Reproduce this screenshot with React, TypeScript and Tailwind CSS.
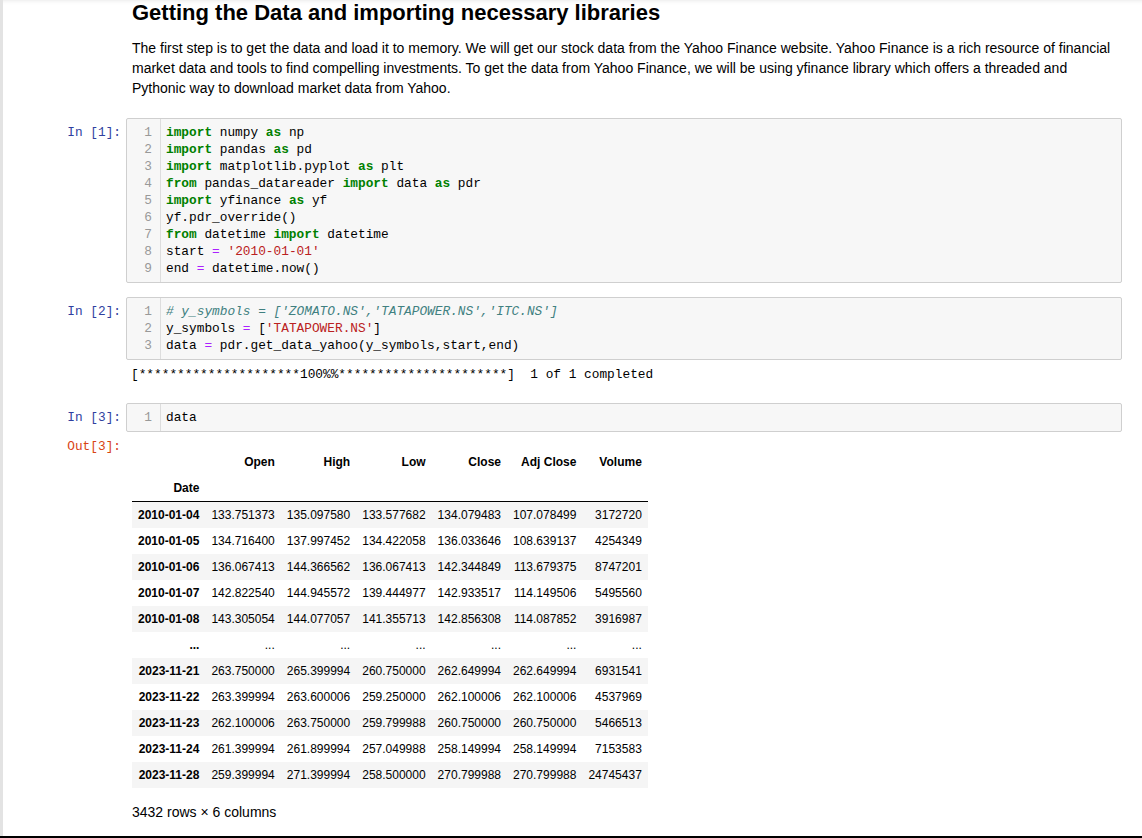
type Tok = [string, string]

const tone: Record<string, string> = {
  k: 'text-[#008000] font-bold',
  o: 'text-[#AA22FF]',
  s: 'text-[#BA2121]',
  c: 'text-[#408080] italic',
  n: '',
}

const cell1: Tok[][] = [
  [['k', 'import'], ['n', ' numpy '], ['k', 'as'], ['n', ' np']],
  [['k', 'import'], ['n', ' pandas '], ['k', 'as'], ['n', ' pd']],
  [['k', 'import'], ['n', ' matplotlib.pyplot '], ['k', 'as'], ['n', ' plt']],
  [['k', 'from'], ['n', ' pandas_datareader '], ['k', 'import'], ['n', ' data '], ['k', 'as'], ['n', ' pdr']],
  [['k', 'import'], ['n', ' yfinance '], ['k', 'as'], ['n', ' yf']],
  [['n', 'yf.pdr_override()']],
  [['k', 'from'], ['n', ' datetime '], ['k', 'import'], ['n', ' datetime']],
  [['n', 'start '], ['o', '='], ['n', ' '], ['s', "'2010-01-01'"]],
  [['n', 'end '], ['o', '='], ['n', ' datetime.now()']],
]

const cell2: Tok[][] = [
  [['c', "# y_symbols = ['ZOMATO.NS','TATAPOWER.NS','ITC.NS']"]],
  [['n', 'y_symbols '], ['o', '='], ['n', ' ['], ['s', "'TATAPOWER.NS'"], ['n', ']']],
  [['n', 'data '], ['o', '='], ['n', ' pdr.get_data_yahoo(y_symbols,start,end)']],
]

const cell3: Tok[][] = [[['n', 'data']]]

const cols = ['Open', 'High', 'Low', 'Close', 'Adj Close', 'Volume']

const rows: string[][] = [
  ['2010-01-04', '133.751373', '135.097580', '133.577682', '134.079483', '107.078499', '3172720'],
  ['2010-01-05', '134.716400', '137.997452', '134.422058', '136.033646', '108.639137', '4254349'],
  ['2010-01-06', '136.067413', '144.366562', '136.067413', '142.344849', '113.679375', '8747201'],
  ['2010-01-07', '142.822540', '144.945572', '139.444977', '142.933517', '114.149506', '5495560'],
  ['2010-01-08', '143.305054', '144.077057', '141.355713', '142.856308', '114.087852', '3916987'],
  ['...', '...', '...', '...', '...', '...', '...'],
  ['2023-11-21', '263.750000', '265.399994', '260.750000', '262.649994', '262.649994', '6931541'],
  ['2023-11-22', '263.399994', '263.600006', '259.250000', '262.100006', '262.100006', '4537969'],
  ['2023-11-23', '262.100006', '263.750000', '259.799988', '260.750000', '260.750000', '5466513'],
  ['2023-11-24', '261.399994', '261.899994', '257.049988', '258.149994', '258.149994', '7153583'],
  ['2023-11-28', '259.399994', '271.399994', '258.500000', '270.799988', '270.799988', '24745437'],
]

const mono = "font-['Liberation_Mono','DejaVu_Sans_Mono',monospace] text-[12.8px] leading-[17px]"

function Prompt({ label, out }: { label?: string; out?: boolean }) {
  return (
    <div
      className={`w-[123px] shrink-0 whitespace-pre pr-[5px] pt-[6px] text-right ${mono} ${
        out ? 'text-[#D84315]' : 'text-[#303F9F]'
      }`}
    >
      {label}
    </div>
  )
}

function CodeCell({ n, lines }: { n: number; lines: Tok[][] }) {
  return (
    <div className="flex">
      <Prompt label={`In [${n}]:`} />
      <div className={`mr-[20px] flex flex-1 rounded-[2px] border border-[#cfcfcf] bg-[#f7f7f7] ${mono}`}>
        <div className="w-[34px] shrink-0 border-r border-[#ddd] py-[5px] pr-[8px] text-right text-[#999]">
          {lines.map((_, i) => (
            <div key={i}>{i + 1}</div>
          ))}
        </div>
        <div className="py-[5px] pl-[5px] text-black">
          {lines.map((line, i) => (
            <div key={i} className="whitespace-pre">
              {line.map(([t, s], j) => (
                <span key={j} className={tone[t]}>
                  {s}
                </span>
              ))}
            </div>
          ))}
        </div>
      </div>
    </div>
  )
}

export default function App() {
  const th = 'p-[6px] text-right font-bold'
  const td = 'p-[6px] text-right font-normal'
  const bar = '[' + '*'.repeat(21) + '100%%' + '*'.repeat(22) + ']  1 of 1 completed'

  return (
    <div className="flex h-[838px] flex-col overflow-hidden bg-white font-['Liberation_Sans',Arial,sans-serif] text-black">
      <div className="flex flex-1 overflow-hidden">
        {/* side gutter */}
        <div className="w-[3px] shrink-0 bg-[#e3e3e3]" />

        <main className="flex-1 shadow-[inset_0_5px_5px_-5px_rgba(0,0,0,0.12)]">
          {/* Markdown cell */}
          <div className="flex">
            <div className="w-[123px] shrink-0" />
            <div className="mr-[20px] flex-1 pl-[6px] pr-[5px]">
              <h2 className="text-[22px] font-bold leading-[26px]">
                Getting the Data and importing necessary libraries
              </h2>
              <p className="mt-[12px] text-[14px] leading-[20px]">
                The first step is to get the data and load it to memory. We will get our stock data from the
                Yahoo Finance website. Yahoo Finance is a rich resource of financial market data and tools to
                find compelling investments. To get the data from Yahoo Finance, we will be using yfinance
                library which offers a threaded and Pythonic way to download market data from Yahoo.
              </p>
            </div>
          </div>

          <div className="mt-[20px]">
            <CodeCell n={1} lines={cell1} />
          </div>

          <div className="mt-[14px]">
            <CodeCell n={2} lines={cell2} />
            <div className="flex">
              <Prompt />
              <div className={`whitespace-pre py-[6px] pl-[5px] ${mono}`}>{bar}</div>
            </div>
          </div>

          <div className="mt-[14px]">
            <CodeCell n={3} lines={cell3} />
            <div className="flex">
              <Prompt label="Out[3]:" out />
              <div className="pl-[6px] pt-[6px]">
                <table className="mt-[11px] border-collapse text-[12px] leading-[14px] text-black">
                  <thead className="border-b border-black">
                    <tr>
                      <th className={th}></th>
                      {cols.map((c) => (
                        <th key={c} className={th}>
                          {c}
                        </th>
                      ))}
                    </tr>
                    <tr>
                      <th className={th}>Date</th>
                      {cols.map((c) => (
                        <th key={c} className={th}></th>
                      ))}
                    </tr>
                  </thead>
                  <tbody>
                    {rows.map((r, i) => (
                      <tr key={i} className="odd:bg-[#f5f5f5]">
                        <th className={th}>{r[0]}</th>
                        {r.slice(1).map((v, j) => (
                          <td key={j} className={td}>
                            {v}
                          </td>
                        ))}
                      </tr>
                    ))}
                  </tbody>
                </table>
                <p className="mt-[14px] text-[14px] leading-[20px]">3432 rows × 6 columns</p>
              </div>
            </div>
          </div>
        </main>
      </div>
      <div className="h-[2px] shrink-0 bg-black" />
    </div>
  )
}
